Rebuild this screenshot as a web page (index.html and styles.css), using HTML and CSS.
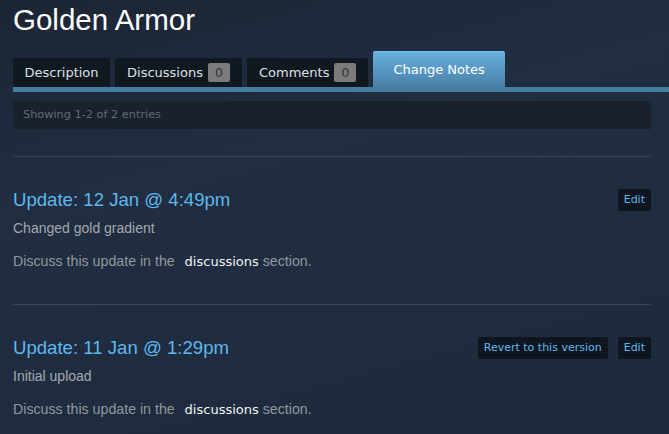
FILE: index.html
```html
<!DOCTYPE html>
<html>
<head>
<meta charset="utf-8">
<link rel="stylesheet" href="styles.css">
</head>
<body>
<div class="page">
  <h1 class="title">Golden Armor</h1>
  <div class="tabs">
    <div class="tab">Description</div>
    <div class="tab">Discussions <span class="badge">0</span></div>
    <div class="tab">Comments <span class="badge">0</span></div>
    <div class="tab active">Change Notes</div>
  </div>
  <div class="content">
    <div class="showing">Showing 1-2 of 2 entries</div>
    <div class="entry">
      <div class="entry-head">
        <div class="entry-title">Update: 12 Jan @ 4:49pm</div>
        <div class="actions">
          <span class="btn">Edit</span>
        </div>
      </div>
      <p class="entry-desc">Changed gold gradient</p>
      <p class="entry-discuss">Discuss this update in the <span class="link">discussions</span> section.</p>
    </div>
    <div class="entry">
      <div class="entry-head">
        <div class="entry-title">Update: 11 Jan @ 1:29pm</div>
        <div class="actions">
          <span class="btn">Revert to this version</span>
          <span class="btn">Edit</span>
        </div>
      </div>
      <p class="entry-desc">Initial upload</p>
      <p class="entry-discuss">Discuss this update in the <span class="link">discussions</span> section.</p>
    </div>
  </div>
</div>
</body>
</html>
```
FILE: styles.css
```css
html, body {
  margin: 0;
  padding: 0;
  height: 100%;
}
body {
  background: linear-gradient(165deg, #1b2535 0%, #212d41 35%, #1f2c3f 70%, #1d2a3b 100%);
  font-family: "Liberation Sans", Arial, sans-serif;
  overflow: hidden;
}
.page {
  padding-left: 13px;
}
.title {
  margin: 3px 0 0 0;
  font-size: 29.5px;
  line-height: 34px;
  font-weight: normal;
  color: #ffffff;
}
.tabs {
  display: flex;
  align-items: flex-end;
  gap: 5px;
  margin-top: 14px;
  border-bottom: 5px solid #467ca0;
}
.tab {
  display: flex;
  align-items: center;
  height: 29px;
  padding: 0 12px;
  background: #101820;
  border-radius: 2px 2px 0 0;
  font-family: "DejaVu Sans", sans-serif;
  font-size: 13px;
  color: #dde1e5;
}
.tab:first-child {
  padding: 0 11.5px;
}
.tab.active {
  height: 35px;
  padding: 0 20px;
  border-top: 1px solid #7cc2ec;
  background: linear-gradient(to bottom, #66b0df 0%, #4a80a6 100%);
  color: #ffffff;
}
.badge {
  display: inline-block;
  margin-left: 5px;
  width: 22px;
  height: 19px;
  line-height: 19px;
  text-align: center;
  background: #7b7b7b;
  color: #2f353a;
  border-radius: 2px;
  font-size: 12.5px;
}
.content {
  width: 638px;
}
.showing {
  margin-top: 9px;
  height: 28px;
  line-height: 28px;
  padding-left: 10px;
  background: #18212c;
  font-family: "DejaVu Sans", sans-serif;
  font-size: 11.3px;
  color: #606c78;
}
.entry {
  margin-top: 27px;
  border-top: 1px solid #37465a;
  padding: 32px 0 33px 0;
}
.entry + .entry {
  margin-top: 0;
}
.entry-head {
  display: flex;
  align-items: center;
  justify-content: space-between;
  height: 22px;
}
.entry-title {
  font-size: 18.6px;
  line-height: 22px;
  color: #5db8ed;
}
.actions {
  display: flex;
  gap: 10px;
}
.btn {
  display: inline-block;
  height: 22px;
  line-height: 22px;
  padding: 0 6px;
  background: #0f161f;
  border-radius: 2px;
  font-family: "DejaVu Sans", sans-serif;
  font-size: 11px;
  color: #5db8ee;
}
.entry-desc {
  margin: 8px 0 0 0;
  font-size: 14px;
  line-height: 18px;
  color: #a3a9ae;
}
.entry-discuss {
  margin: 15px 0 0 0;
  font-size: 14.2px;
  line-height: 18px;
  color: #90979d;
}
.link {
  margin-left: 6px;
  font-family: "DejaVu Sans", sans-serif;
  font-size: 13px;
  color: #f0f2f4;
}
```
